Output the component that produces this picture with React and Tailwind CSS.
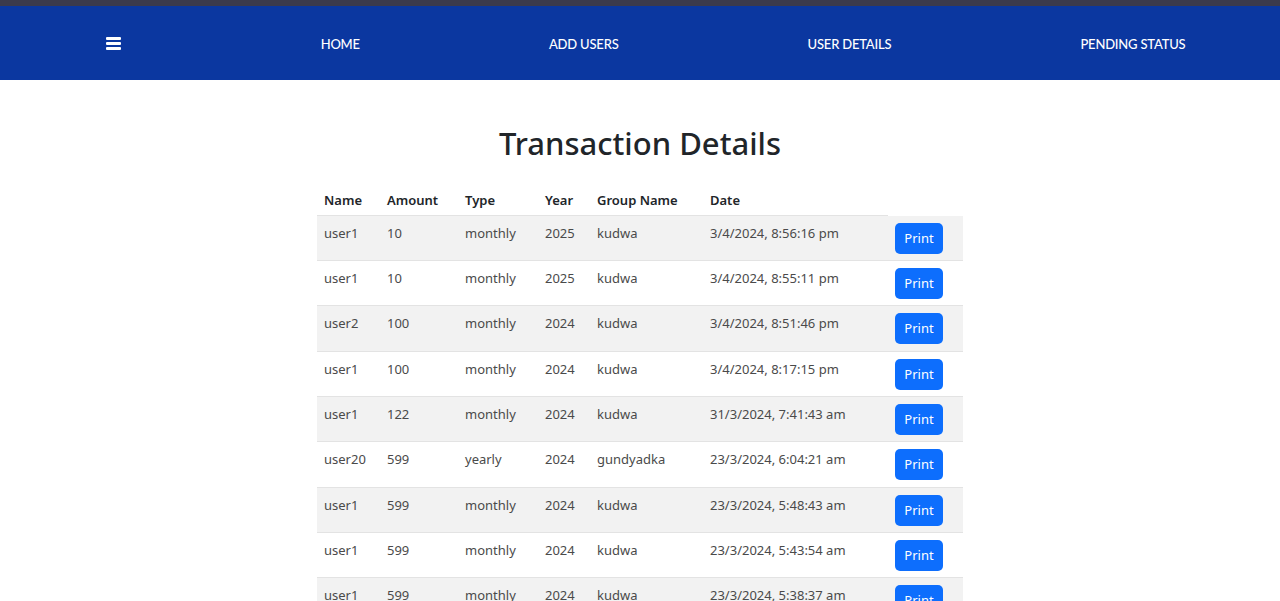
import React from "react";

const rows = [
  ["user1", "10", "monthly", "2025", "kudwa", "3/4/2024, 8:56:16 pm"],
  ["user1", "10", "monthly", "2025", "kudwa", "3/4/2024, 8:55:11 pm"],
  ["user2", "100", "monthly", "2024", "kudwa", "3/4/2024, 8:51:46 pm"],
  ["user1", "100", "monthly", "2024", "kudwa", "3/4/2024, 8:17:15 pm"],
  ["user1", "122", "monthly", "2024", "kudwa", "31/3/2024, 7:41:43 am"],
  ["user20", "599", "yearly", "2024", "gundyadka", "23/3/2024, 6:04:21 am"],
  ["user1", "599", "monthly", "2024", "kudwa", "23/3/2024, 5:48:43 am"],
  ["user1", "599", "monthly", "2024", "kudwa", "23/3/2024, 5:43:54 am"],
  ["user1", "599", "monthly", "2024", "kudwa", "23/3/2024, 5:38:37 am"],
];

const headers = ["Name", "Amount", "Type", "Year", "Group Name", "Date"];
const widths = ["w-[63px]", "w-[78px]", "w-[80px]", "w-[52px]", "w-[113px]", "w-[185px]"];

const App = () => {
  return (
    <div className="min-h-screen bg-white font-['Noto_Sans',sans-serif]">
      {/* top strip */}
      <div className="h-[6px] bg-[#3b3a4c]"></div>

      {/* Navbar */}
      <nav className="h-[74px] bg-[#0b37a0] flex items-center justify-around font-['Lato',sans-serif] text-[13px] font-medium text-white">
        <button className="w-[37px] flex flex-col items-center gap-[2px]">
          <span className="block w-[15px] h-[3px] bg-white rounded-[1px]"></span>
          <span className="block w-[15px] h-[3px] bg-white rounded-[1px]"></span>
          <span className="block w-[15px] h-[3px] bg-white rounded-[1px]"></span>
        </button>
        <a className="mt-[3px] tracking-[-0.2px]">HOME</a>
        <a className="mt-[3px] tracking-[-0.2px]">ADD USERS</a>
        <a className="mt-[3px] tracking-[-0.2px]">USER DETAILS</a>
        <a className="mt-[3px] tracking-[-0.2px]">PENDING STATUS</a>
      </nav>

      {/* Content */}
      <div className="flex flex-col items-center">
        <h1 className="mt-[40px] mb-[19px] text-[31px] leading-[46px] font-medium text-[#212529]">
          Transaction Details
        </h1>

        <table className="w-[646px] border-collapse text-[13px] leading-[19px]">
          <thead>
            <tr>
              {headers.map((h, i) => (
                <th
                  key={h}
                  className={`${widths[i]} text-left font-semibold text-[#212529] px-[7px] pt-[6px] pb-[5px] border-b border-[#e3e3e3]`}
                >
                  {h}
                </th>
              ))}
            </tr>
          </thead>
          <tbody>
            {rows.map((r, idx) => (
              <tr
                key={idx}
                className={`${idx % 2 === 0 ? "bg-[#f2f2f2]" : "bg-white"} border-b border-[#e3e3e3]`}
              >
                {r.map((c, j) => (
                  <td key={j} className="align-top px-[7px] pt-[8px] text-[#4a4a4a]">
                    {c}
                  </td>
                ))}
                <td className="align-top pl-[7px] pt-[7px] pb-[6.35px]">
                  <button className="w-[48px] h-[31px] rounded-[5px] bg-[#0d6efd] text-white text-[13px]">
                    Print
                  </button>
                </td>
              </tr>
            ))}
          </tbody>
        </table>
      </div>
    </div>
  );
};

export default App;
